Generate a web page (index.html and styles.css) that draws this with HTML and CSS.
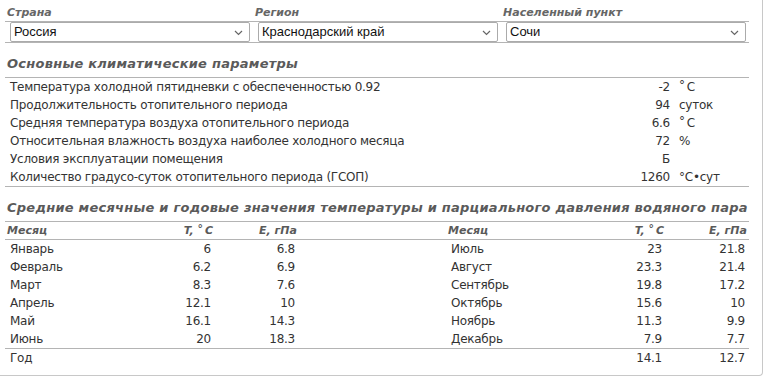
FILE: index.html
```html
<!DOCTYPE html>
<html lang="ru">
<head>
<meta charset="utf-8">
<title>Климатические параметры</title>
<link rel="stylesheet" href="styles.css">
</head>
<body>
<div class="panel">
  <div class="place">
    <div class="place-col">
      <div class="place-label">Страна</div>
      <div class="place-field">
        <div class="select"><span>Россия</span><svg class="chev" width="9" height="6" viewBox="0 0 9 6"><path d="M1 1 L4.5 4.5 L8 1" fill="none" stroke="#666" stroke-width="1.2"/></svg></div>
      </div>
    </div>
    <div class="place-col">
      <div class="place-label">Регион</div>
      <div class="place-field">
        <div class="select"><span>Краснодарский край</span><svg class="chev" width="9" height="6" viewBox="0 0 9 6"><path d="M1 1 L4.5 4.5 L8 1" fill="none" stroke="#666" stroke-width="1.2"/></svg></div>
      </div>
    </div>
    <div class="place-col">
      <div class="place-label">Населенный пункт</div>
      <div class="place-field">
        <div class="select"><span>Сочи</span><svg class="chev" width="9" height="6" viewBox="0 0 9 6"><path d="M1 1 L4.5 4.5 L8 1" fill="none" stroke="#666" stroke-width="1.2"/></svg></div>
      </div>
    </div>
  </div>

  <h2 class="section">Основные климатические параметры</h2>
  <table class="params">
    <colgroup><col class="p-name"><col class="p-val"><col class="p-unit"></colgroup>
    <tbody>
      <tr><td>Температура холодной пятидневки с обеспеченностью 0.92</td><td class="num">-2</td><td><span class="deg">°</span>C</td></tr>
      <tr><td>Продолжительность отопительного периода</td><td class="num">94</td><td>суток</td></tr>
      <tr><td>Средняя температура воздуха отопительного периода</td><td class="num">6.6</td><td><span class="deg">°</span>C</td></tr>
      <tr><td>Относительная влажность воздуха наиболее холодного месяца</td><td class="num">72</td><td>%</td></tr>
      <tr><td>Условия эксплуатации помещения</td><td class="num">Б</td><td></td></tr>
      <tr><td>Количество градусо-суток отопительного периода (ГСОП)</td><td class="num">1260</td><td>°C•сут</td></tr>
    </tbody>
  </table>

  <h2 class="section">Средние месячные и годовые значения температуры и парциального давления водяного пара</h2>
  <table class="months">
    <colgroup>
      <col class="m1"><col class="m2"><col class="m3"><col class="ms"><col class="m4"><col class="m5"><col class="m6">
    </colgroup>
    <thead>
      <tr><th>Месяц</th><th class="num">T, <span class="deg">°</span>C</th><th class="num">E, гПа</th><th></th><th>Месяц</th><th class="num">T, <span class="deg">°</span>C</th><th class="num">E, гПа</th></tr>
    </thead>
    <tbody>
      <tr><td>Январь</td><td class="num">6</td><td class="num">6.8</td><td></td><td>Июль</td><td class="num">23</td><td class="num">21.8</td></tr>
      <tr><td>Февраль</td><td class="num">6.2</td><td class="num">6.9</td><td></td><td>Август</td><td class="num">23.3</td><td class="num">21.4</td></tr>
      <tr><td>Март</td><td class="num">8.3</td><td class="num">7.6</td><td></td><td>Сентябрь</td><td class="num">19.8</td><td class="num">17.2</td></tr>
      <tr><td>Апрель</td><td class="num">12.1</td><td class="num">10</td><td></td><td>Октябрь</td><td class="num">15.6</td><td class="num">10</td></tr>
      <tr><td>Май</td><td class="num">16.1</td><td class="num">14.3</td><td></td><td>Ноябрь</td><td class="num">11.3</td><td class="num">9.9</td></tr>
      <tr><td>Июнь</td><td class="num">20</td><td class="num">18.3</td><td></td><td>Декабрь</td><td class="num">7.9</td><td class="num">7.7</td></tr>
    </tbody>
    <tfoot>
      <tr><td>Год</td><td></td><td></td><td></td><td></td><td class="num">14.1</td><td class="num">12.7</td></tr>
    </tfoot>
  </table>
</div>
</body>
</html>
```
FILE: styles.css
```css
html, body {
  margin: 0;
  padding: 0;
  background: #fff;
}

body {
  font-family: "DejaVu Sans", Verdana, sans-serif;
  font-size: 12px;
  letter-spacing: -0.25px;
  color: #333;
}

.panel {
  width: 744px;
  height: 375px;
  padding: 0 13px 0 5px;
  border-right: 1px solid #c8c8c8;
  border-bottom: 1px solid #c8c8c8;
  border-bottom-right-radius: 4px;
  box-sizing: content-box;
}

/* place selectors */
.place {
  display: grid;
  grid-template-columns: 248px 248px 248px;
}

.place-label {
  padding: 4px 0 0 2px;
  line-height: 17px;
  height: 17px;
  font-weight: bold;
  font-style: italic;
  font-size: 11px;
  letter-spacing: 0;
  color: #666;
  border-bottom: 1px solid #b4b4b4;
}

.place-field {
  height: 20px;
  padding-left: 5px;
  border-bottom: 1px solid #b4b4b4;
}

.select {
  position: relative;
  box-sizing: border-box;
  width: 240px;
  height: 20px;
  border: 1px solid #ababab;
  border-radius: 2px;
  background: #fff;
  font-family: "Liberation Sans", Arial, sans-serif;
  font-size: 13px;
  letter-spacing: 0;
  line-height: 18px;
  color: #111;
  padding-left: 3px;
}

.chev {
  position: absolute;
  right: 6px;
  top: 7px;
}

/* section headings */
.section {
  margin: 0;
  padding: 12px 0 4px 2px;
  line-height: 18px;
  font-size: 13px;
  letter-spacing: 0.25px;
  font-weight: bold;
  font-style: italic;
  color: #5a5a5a;
  white-space: nowrap;
  border-bottom: 1px solid #b4b4b4;
}

/* tables */
table {
  border-collapse: collapse;
  table-layout: fixed;
  width: 744px;
}

td, th {
  padding: 0;
  white-space: nowrap;
}

.num { text-align: right; }

.deg {
  display: inline-block;
  margin-right: 2px;
  position: relative;
  top: -2px;
}

.params col.p-name { width: 594px; }
.params col.p-val { width: 80px; }
.params col.p-unit { width: 70px; }

.params td {
  height: 17px;
  line-height: 17px;
  padding: 1px 0 0 5px;
}

.params td.num { padding: 1px 9px 0 0; }
.params td:last-child { padding-left: 0; }

.params tbody tr:last-child td {
  border-bottom: 1px solid #b4b4b4;
}

.months col.m1 { width: 130px; }
.months col.m2 { width: 80px; }
.months col.m3 { width: 84px; }
.months col.ms { width: 147px; }
.months col.m4 { width: 120px; }
.months col.m5 { width: 100px; }
.months col.m6 { width: 83px; }

.months th {
  height: 16px;
  line-height: 16px;
  font-size: 11px;
  letter-spacing: 0;
  font-weight: bold;
  font-style: italic;
  color: #5a5a5a;
  text-align: left;
  padding: 1px 2px 0 2px;
  border-bottom: 1px solid #b4b4b4;
}

.months th.num { text-align: right; }

.months td {
  height: 17px;
  line-height: 17px;
  padding: 1px 4px 0 5px;
}

.months tbody tr:last-child td {
  border-bottom: 1px solid #b4b4b4;
}
```
